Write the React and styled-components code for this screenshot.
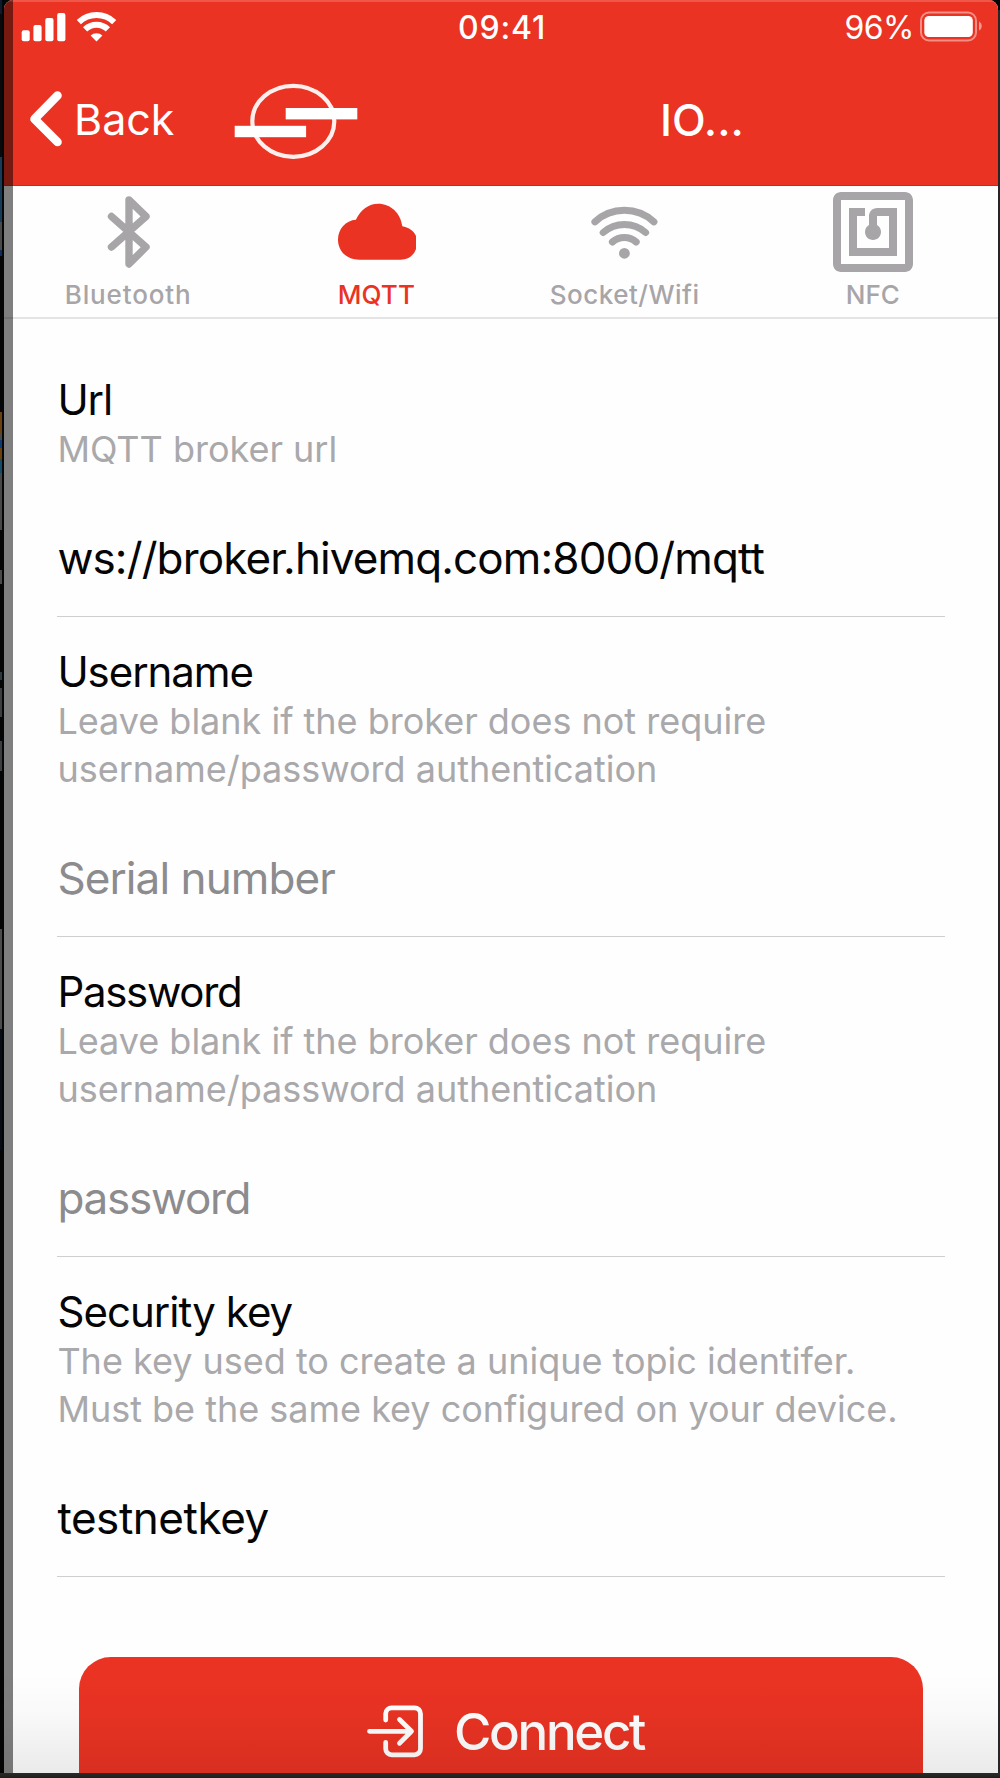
import { useState } from 'react';
import styled, { createGlobalStyle } from 'styled-components';

const RED = '#ea3323';
const GREY = '#a7a5a8';

const GlobalStyle = createGlobalStyle`
  * {
    box-sizing: border-box;
  }

  body {
    margin: 0;
    background: #0b0c0e;
    font-family: Inter, 'Liberation Sans', sans-serif;
  }

  svg {
    display: block;
    flex: none;
  }
`;

const Desktop = styled.div`
  width: 1000px;
  height: 1778px;
  padding: 0 2px 5px 4px;
  overflow: hidden;
  background:
    linear-gradient(#2a2c2a, #1c1e1c) 0 100% / 100% 5px no-repeat,
    linear-gradient(#262626, #262626) 100% 10px / 2px 100% no-repeat,
    linear-gradient(
      #0b1a2c 0 14px,
      #08090b 14px 157px,
      #163c58 157px 222px,
      #4a4a4a 222px 250px,
      #0f2c5c 250px 256px,
      #050505 256px 412px,
      #6a4210 412px 433px,
      #4a4a4a 433px 440px,
      #0f3a78 440px 448px,
      #6a4210 448px 459px,
      #164a66 459px 473px,
      #484848 473px 530px,
      #050505 530px 570px,
      #4a4a4a 570px 584px,
      #050505 584px 672px,
      #2c3840 672px 680px,
      #050505 680px 688px,
      #3c3e40 688px 717px,
      #050505 717px 741px,
      #3c3e40 741px 771px,
      #050505 771px 929px,
      #4c4c4c 929px 1029px,
      #070c16 1029px 1150px,
      #050505 1150px
    ) 0 0 / 2px 100% no-repeat,
    #040506;
`;

const Phone = styled.div`
  position: relative;
  display: flex;
  flex-direction: column;
  width: 994px;
  height: 1773px;
  overflow: hidden;
  background: #fefefe;
  border-radius: 9px 9px 0 0;
`;

const EdgeShadow = styled.div`
  position: absolute;
  top: 0;
  bottom: 0;
  left: 0;
  width: 9px;
  background: rgba(0, 0, 0, 0.5);
`;

const BottomShade = styled.div`
  position: absolute;
  left: 0;
  right: 0;
  bottom: 0;
  height: 100px;
  background: linear-gradient(rgba(0, 0, 0, 0), rgba(0, 0, 0, 0.02) 40%, rgba(0, 0, 0, 0.08));
  pointer-events: none;
`;

const Header = styled.header`
  flex: none;
  height: 186px;
  background: ${RED};
  border-top: 2px solid #f0574b;
  border-bottom: 1px solid #c62a1e;
  color: white;
`;

const StatusBar = styled.div`
  display: grid;
  grid-template-columns: 1fr auto 1fr;
  align-items: center;
  height: 50px;
  padding: 0 15px 0 17px;
`;

const Signal = styled.div`
  display: flex;
  align-items: center;
  gap: 11px;
`;

const Clock = styled.span`
  font-size: 32px;
  font-weight: 500;
  letter-spacing: 0.8px;
`;

const Power = styled.div`
  display: flex;
  align-items: center;
  justify-content: flex-end;
  gap: 6px;
  margin-right: -1px;
  font-size: 32px;
  letter-spacing: -0.5px;
`;

const NavBar = styled.div`
  display: flex;
  align-items: center;
  height: 133px;
  padding-left: 26px;
`;

const BackButton = styled.button`
  display: flex;
  align-items: center;
  gap: 10px;
  width: 204px;
  padding: 0;
  border: 0;
  background: transparent;
  color: white;
  font: 400 43px/60px Inter, sans-serif;
`;

const NavTitle = styled.h1`
  margin: 2px 0 0 302px;
  font-size: 44px;
  line-height: 60px;
  font-weight: 500;
`;

const Tabs = styled.nav`
  flex: none;
  display: grid;
  grid-template-columns: repeat(4, 1fr);
  height: 133px;
  padding: 6px 1px 0 0;
  border-bottom: 2px solid #e4e4e5;
`;

const TabButton = styled.button`
  display: flex;
  flex-direction: column;
  align-items: center;
  gap: 7px;
  padding: 0;
  border: 0;
  background: transparent;
  color: ${({ $active }) => ($active ? RED : GREY)};
  font: 500 26px/32px Inter, sans-serif;
  letter-spacing: ${({ $spacing }) => $spacing}px;
`;

const Form = styled.main`
  display: flex;
  flex-direction: column;
  padding: 26px 53px 0 53.4px;
`;

const Field = styled.section`
  display: flex;
  flex-direction: column;
  padding: 30px 0 31px;
  border-bottom: 1px solid #cfcfd2;
`;

const Label = styled.label`
  font-size: 42px;
  line-height: 50px;
  letter-spacing: ${({ $spacing = -1.05 }) => $spacing}px;
  color: #050505;
`;

const Hint = styled.p`
  margin: 0 0 58px;
  font-size: 36px;
  line-height: 48px;
  letter-spacing: -0.01px;
  color: #a9a8ab;
  white-space: pre-line;
`;

const Input = styled.input`
  height: 54px;
  padding: 0;
  border: 0;
  outline: none;
  background: transparent;
  font: 400 44px/54px Inter, sans-serif;
  letter-spacing: ${({ $spacing }) => $spacing}px;
  color: #050505;

  &::placeholder {
    color: #8c8b8e;
    opacity: 1;
  }
`;

const ConnectButton = styled.button`
  flex: none;
  display: flex;
  justify-content: center;
  gap: 29px;
  width: 844px;
  height: 150px;
  margin: 80px 0 0 75px;
  padding: 44px 0 0 9px;
  border: 0;
  border-radius: 32px;
  background: ${RED};
  color: white;
  font: 500 51px/62px Inter, sans-serif;
  letter-spacing: -2.3px;
`;

const SignalBars = () => (
  <svg width="45" height="30" viewBox="0 0 45 30" fill="white">
    <rect x="0.7" y="18.3" width="8" height="11" rx="2" />
    <rect x="12.4" y="13" width="8.2" height="16.3" rx="2" />
    <rect x="24.3" y="6" width="8.2" height="23.3" rx="2" />
    <rect x="36.2" y="1" width="8.2" height="28.3" rx="2" />
  </svg>
);

const SmallWifi = () => (
  <svg width="40" height="30" viewBox="0 0 40 30" fill="none" stroke="white" strokeWidth="6">
    <path d="M1.8 10.2A25.5 25.5 0 0 1 37.2 10.2" />
    <path d="M8.1 17.4A16.3 16.3 0 0 1 30.9 17.4" />
    <path d="M19.5 29.4L13.6 23.4A8.8 8.8 0 0 1 25.4 23.4Z" fill="white" stroke="none" />
  </svg>
);

const Battery = () => (
  <svg width="64" height="32" viewBox="0 0 64 32">
    <rect x="1" y="1.5" width="55" height="28" rx="8" fill="none" stroke="white" strokeOpacity="0.45" strokeWidth="2" />
    <rect x="4.3" y="5" width="48.5" height="21" rx="4.5" fill="white" />
    <path d="M59 10.5A5 5 0 0 1 59 19.5Z" fill="white" fillOpacity="0.5" />
  </svg>
);

const Chevron = () => (
  <svg width="34" height="58" viewBox="0 0 34 58" fill="none" stroke="white" strokeWidth="8.6" strokeLinecap="round" strokeLinejoin="round">
    <path d="M27.5 5.5L4.5 29L27.5 52" />
  </svg>
);

const Logo = () => (
  <svg width="124" height="80" viewBox="0 0 124 80">
    <ellipse cx="59.3" cy="42.3" rx="41" ry="35.5" fill="none" stroke="white" strokeOpacity="0.92" strokeWidth="4.2" />
    <rect x="51.7" y="29" width="71.6" height="11.4" fill="white" />
    <rect x="0.7" y="46.8" width="71.4" height="11.4" fill="white" />
  </svg>
);

const BluetoothIcon = () => (
  <svg width="80" height="80" viewBox="0 0 80 80" fill="none" stroke="currentColor" strokeWidth="7.4" strokeLinecap="round" strokeLinejoin="round">
    <path d="M23.5 24.5L58 55L41 72V8L58 24.5L23.5 55" />
  </svg>
);

const CloudIcon = () => (
  <svg width="80" height="80" viewBox="-0.7 0 80 80" fill="currentColor">
    <path d="M22.5 67.7C9.5 67.7 1.3 58.5 1.3 47.7C1.3 37 9 28.5 19.2 27.8C24 17.5 32 11.7 41.5 11.7C54 11.7 64 21 65.6 34.3C71.5 35.3 77 38.7 79.3 44V57C77 63.5 71.5 67.7 64 67.7Z" />
  </svg>
);

const WifiIcon = () => (
  <svg width="80" height="80" viewBox="0 0 80 80" fill="none" stroke="currentColor" strokeWidth="7" strokeLinecap="round">
    <path d="M9.9 29.8A43.6 43.6 0 0 1 68.9 29.8" />
    <path d="M18.2 40.5A32 32 0 0 1 60.6 40.5" />
    <path d="M27.4 50A18 18 0 0 1 51.2 50" />
    <circle cx="39.4" cy="61.3" r="5.4" fill="currentColor" stroke="none" />
  </svg>
);

const NfcIcon = () => (
  <svg width="80" height="80" viewBox="2 2 20 20" fill="currentColor">
    <path d="M20 2H4c-1.1 0-2 .9-2 2v16c0 1.1.9 2 2 2h16c1.1 0 2-.9 2-2V4c0-1.1-.9-2-2-2zm0 18H4V4h16v16zM18 6h-5c-1.1 0-2 .9-2 2v2.28c-.6.35-1 .98-1 1.72 0 1.1.9 2 2 2s2-.9 2-2c0-.74-.4-1.38-1-1.72V8h3v8H8V8h2V6H6v12h12V6z" />
  </svg>
);

const EnterIcon = () => (
  <svg width="58" height="62" viewBox="0 0 58 62" fill="none" stroke="white" strokeWidth="4.8" strokeLinecap="round" strokeLinejoin="round">
    <path d="M18.7 19V12.5A6 6 0 0 1 24.7 6.8H47.5A6 6 0 0 1 53.5 12.8V47.8A6 6 0 0 1 47.5 53.8H24.7A6 6 0 0 1 18.7 47.8V41.5" />
    <path d="M2.5 30.3H44M32.5 18.5L44.5 30.3L32.5 42.3" />
  </svg>
);

const tabs = [
  { id: 'bluetooth', label: 'Bluetooth', icon: BluetoothIcon, spacing: 0.85 },
  { id: 'mqtt', label: 'MQTT', icon: CloudIcon, spacing: 0.1 },
  { id: 'socket', label: 'Socket/Wifi', icon: WifiIcon, spacing: 0.5 },
  { id: 'nfc', label: 'NFC', icon: NfcIcon, spacing: 0 },
];

const AUTH_HINT = 'Leave blank if the broker does not require\nusername/password authentication';

const fields = [
  { id: 'url', label: 'Url', hint: 'MQTT broker url', spacing: -0.88 },
  { id: 'username', label: 'Username', hint: AUTH_HINT, placeholder: 'Serial number', spacing: -0.9 },
  { id: 'password', label: 'Password', labelSpacing: -1.3, hint: AUTH_HINT, placeholder: 'password', spacing: -1.25 },
  {
    id: 'key',
    label: 'Security key',
    labelSpacing: -0.95,
    hint: 'The key used to create a unique topic identifer.\nMust be the same key configured on your device.',
    spacing: -0.45,
  },
];

const App = () => {
  const [active, setActive] = useState('mqtt');
  const [values, setValues] = useState({
    url: 'ws://broker.hivemq.com:8000/mqtt',
    username: '',
    password: '',
    key: 'testnetkey',
  });

  const handleChange = (e) => {
    setValues({ ...values, [e.target.id]: e.target.value });
  };

  return (
    <Desktop>
      <GlobalStyle />
      <Phone>
        <Header>
          <StatusBar>
            <Signal>
              <SignalBars />
              <SmallWifi />
            </Signal>
            <Clock>09:41</Clock>
            <Power>
              96%
              <Battery />
            </Power>
          </StatusBar>
          <NavBar>
            <BackButton type="button">
              <Chevron />
              Back
            </BackButton>
            <Logo />
            <NavTitle>IO...</NavTitle>
          </NavBar>
        </Header>

        <Tabs>
          {tabs.map(({ id, label, icon: Icon, spacing }) => (
            <TabButton key={id} type="button" $active={id === active} $spacing={spacing} onClick={() => setActive(id)}>
              <Icon />
              {label}
            </TabButton>
          ))}
        </Tabs>

        <Form>
          {fields.map(({ id, label, labelSpacing, hint, placeholder, spacing }) => (
            <Field key={id}>
              <Label htmlFor={id} $spacing={labelSpacing}>{label}</Label>
              <Hint>{hint}</Hint>
              <Input
                id={id}
                value={values[id]}
                placeholder={placeholder}
                onChange={handleChange}
                spellCheck={false}
                $spacing={spacing}
              />
            </Field>
          ))}
        </Form>

        <ConnectButton type="button">
          <EnterIcon />
          Connect
        </ConnectButton>

        <BottomShade />
        <EdgeShadow />
      </Phone>
    </Desktop>
  );
};

export default App;
